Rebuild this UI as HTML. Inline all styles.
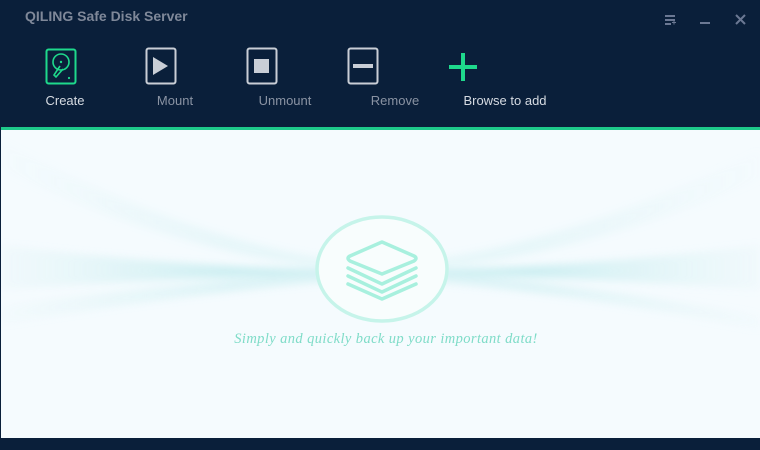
<!DOCTYPE html>
<html><head><style>
*{margin:0;padding:0;box-sizing:border-box}
body{width:760px;height:450px;background:#0a1f3a;position:relative;overflow:hidden;font-family:"Liberation Sans",sans-serif}
.title{position:absolute;left:25px;top:8px;color:#7f8899;font-weight:bold;font-size:14px}
.lbl{position:absolute;top:93px;font-size:13px;color:#8a93a3;text-align:center;width:110px}
.line{position:absolute;left:1px;top:127px;width:759px;height:3px;background:#1ec98a}
.content{position:absolute;left:1px;top:130px;width:759px;height:308px;background:#f5fbfe;overflow:hidden}
.slogan{position:absolute;top:331px;left:0;width:772px;text-align:center;font-family:"Liberation Serif",serif;font-style:italic;font-size:14.5px;color:#7fdcc8;letter-spacing:0.4px}
</style></head><body>
<div class="title">QILING Safe Disk Server</div>
<svg style="position:absolute;left:0;top:0" width="760" height="130">
 <g fill="#6b7893">
  <rect x="665" y="15" width="10" height="2"/><rect x="665" y="19" width="10" height="2"/><rect x="665" y="23" width="6" height="2"/><rect x="672" y="22" width="4" height="1"/><rect x="673.5" y="20.5" width="1" height="4"/>
  <rect x="700" y="22" width="10" height="2"/>
 </g>
 <path d="M736 15 L745 24 M745 15 L736 24" stroke="#6b7893" stroke-width="2"/>
 <rect x="46.5" y="49.5" width="29" height="34" rx="2" fill="none" stroke="#1ed98c" stroke-width="2"/>
 <circle cx="61" cy="62" r="8" fill="none" stroke="#1ed98c" stroke-width="1.6"/>
 <circle cx="61" cy="62" r="1.2" fill="#1ed98c"/>
 <path d="M60 66 L54 75 L56 77 L63 69" fill="none" stroke="#1ed98c" stroke-width="1.6"/>
 <circle cx="69" cy="78" r="1.1" fill="#1ed98c"/>
 <rect x="146.5" y="48.5" width="29" height="35" rx="2" fill="none" stroke="#c9ced6" stroke-width="2"/>
 <path d="M153 57 L168 66 L153 75 Z" fill="#c9ced6"/>
 <rect x="247.5" y="48.5" width="29" height="35" rx="2" fill="none" stroke="#c9ced6" stroke-width="2"/>
 <rect x="254" y="59" width="15" height="14" fill="#c9ced6"/>
 <rect x="348.5" y="48.5" width="29" height="35" rx="2" fill="none" stroke="#c9ced6" stroke-width="2"/>
 <rect x="353" y="64" width="20" height="4" fill="#c9ced6"/>
 <rect x="449" y="65" width="28" height="4" fill="#1ed98c"/>
 <rect x="461" y="53" width="4" height="28" fill="#1ed98c"/>
</svg>
<div class="lbl" style="left:10px;color:#d6dbe2">Create</div>
<div class="lbl" style="left:120px">Mount</div>
<div class="lbl" style="left:230px">Unmount</div>
<div class="lbl" style="left:340px">Remove</div>
<div class="lbl" style="left:450px;color:#d6dbe2">Browse to add</div>
<div class="line"></div>
<div class="content">
<svg width="759" height="308" style="position:absolute;left:0;top:0">
 <defs>
  <linearGradient id="g" x1="0" x2="1"><stop offset="0" stop-color="#d8f1f3" stop-opacity="0.2"/><stop offset="0.3" stop-color="#c4ecef"/><stop offset="0.7" stop-color="#c4ecef"/><stop offset="1" stop-color="#d8f1f3" stop-opacity="0.2"/></linearGradient>
  <filter id="b"><feGaussianBlur stdDeviation="4"/></filter>
 </defs>
 <g filter="url(#b)" opacity="0.8">
  <path d="M0 10 Q200 120 380 135 Q560 120 759 20 L759 50 Q560 135 380 143 Q200 135 0 40Z" fill="url(#g)" opacity="0.35"/>
  <path d="M0 115 Q200 140 380 140 Q560 140 759 115 L759 160 Q560 145 380 145 Q200 145 0 160Z" fill="url(#g)"/>
  <path d="M0 175 Q200 150 380 138 Q560 150 759 185 L759 200 Q560 160 380 148 Q200 160 0 195Z" fill="url(#g)" opacity="0.6"/>
 </g>
 <ellipse cx="381" cy="139" rx="65" ry="52" fill="#f8fdfd" stroke="#c6f4ea" stroke-width="3.5"/>
 <g fill="none" stroke="#a8f0de" stroke-width="3.5" stroke-linejoin="round" stroke-linecap="round">
  <path d="M381 112 L413 126 Q417 128 413 131 L381 144 L349 131 Q345 128 349 126 Z"/>
  <path d="M347 138 L381 154 L415 138"/>
  <path d="M347 146 L381 162 L415 146"/>
  <path d="M347 154 L381 169 L415 154"/>
 </g>
</svg>
</div>
<div class="slogan">Simply and quickly back up your important data!</div>
</body></html>
